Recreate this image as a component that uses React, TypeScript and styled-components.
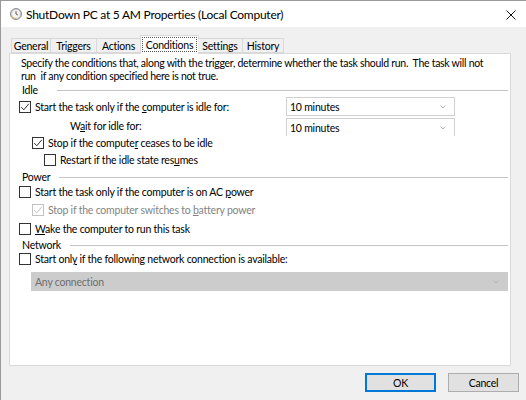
import React from 'react'
import styled, { createGlobalStyle } from 'styled-components'

const GlobalStyle = createGlobalStyle`
  html, body {
    margin: 0;
    background: #f0f0f0;
  }
  body {
    font-family: Lato, "Liberation Sans", sans-serif;
    font-size: 10.5px;
    letter-spacing: -0.22px;
    color: #000;
  }
`

const Window = styled.div`
  width: 525px;
  height: 399px;
  border-top: 1px solid #9a9a9a;
  border-left: 1px solid #9a9a9a;
  background: #f0f0f0;
  display: flex;
  flex-direction: column;
  overflow: hidden;
`

const TitleBar = styled.div`
  height: 26px;
  flex: none;
  background: #fff;
  display: flex;
  align-items: center;
  padding-left: 9px;
  padding-right: 10px;
`

const TitleText = styled.div`
  flex: 1;
  margin-left: 4px;
  font-size: 12px;
  letter-spacing: -0.25px;
  color: #000;
`

const CloseButton = styled.div`
  width: 10px;
  height: 10px;
  display: flex;
  margin-top: 1px;
`

const Body = styled.div`
  flex: 1;
  display: flex;
  flex-direction: column;
  padding: 8px 0 0 8px;
`

const TabStrip = styled.div`
  display: flex;
  align-items: flex-end;
  height: 18px;
  padding-left: 2px;
  position: relative;
  z-index: 1;
`

const Tab = styled.div<{ $w: number; $active?: boolean }>`
  width: ${({ $w }) => $w}px;
  height: ${({ $active }) => ($active ? 19 : 15)}px;
  margin: ${({ $active }) => ($active ? '0 -1px -1px' : '0')};
  box-sizing: border-box;
  border: 1px solid #d9d9d9;
  border-bottom: ${({ $active }) => ($active ? 'none' : '1px solid #d9d9d9')};
  border-left-width: ${({ $active }) => ($active ? 1 : 0)}px;
  background: ${({ $active }) => ($active ? '#fff' : '#f0f0f0')};
  display: flex;
  align-items: ${({ $active }) => ($active ? 'flex-start' : 'center')};
  justify-content: center;
  padding: ${({ $active }) => ($active ? '1px 1px 0' : '0')};
  white-space: nowrap;
  &:first-child {
    border-left-width: 1px;
  }
`

const FocusBox = styled.span`
  display: flex;
  align-items: center;
  justify-content: center;
  width: 100%;
  height: 15px;
  box-sizing: border-box;
  border: 1px dotted #555;
`

const Panel = styled.div`
  width: 502px;
  height: 313px;
  box-sizing: border-box;
  background: #fff;
  border: 1px solid #d9d9d9;
  padding: 3px 2px 0 9px;
  display: flex;
  flex-direction: column;
`

const Intro = styled.div`
  margin-left: 2px;
  line-height: 13px;
  white-space: pre;
  letter-spacing: -0.28px;
`

const Group = styled.div<{ $h: number }>`
  height: ${({ $h }) => $h}px;
  display: flex;
  align-items: center;
  padding-left: 3px;
`

const GroupLabel = styled.span`
  min-width: 35px;
  box-sizing: border-box;
  padding-right: 9px;
`

const GroupRule = styled.div`
  flex: 1;
  height: 1px;
  background: #c4c4c4;
  margin-top: 1px;
`

const Row = styled.div<{ $h: number; $indent?: number }>`
  height: ${({ $h }) => $h}px;
  display: grid;
  grid-template-columns: 267px 169px;
  align-items: center;
  padding-left: ${({ $indent = 0 }) => $indent}px;
`

const CheckLabel = styled.label<{ $disabled?: boolean }>`
  display: flex;
  align-items: center;
  white-space: nowrap;
  color: ${({ $disabled }) => ($disabled ? '#838383' : '#000')};
`

const Box = styled.span<{ $disabled?: boolean }>`
  width: 12px;
  height: 12px;
  flex: none;
  box-sizing: border-box;
  border: 1px solid ${({ $disabled }) => ($disabled ? '#c2c2c2' : '#333')};
  background: #fff;
  margin-right: 4px;
  display: flex;
  align-items: center;
  justify-content: center;
`

const PlainLabel = styled.span`
  padding-left: 51px;
  white-space: nowrap;
`

const Combo = styled.div<{ $open?: boolean; $disabled?: boolean }>`
  height: ${({ $open }) => ($open ? 18 : 19)}px;
  box-sizing: border-box;
  border: 1px solid ${({ $disabled }) => ($disabled ? '#cccccc' : '#d0d0d0')};
  border-bottom-width: ${({ $open }) => ($open ? 0 : 1)}px;
  background: ${({ $disabled }) => ($disabled ? '#cccccc' : '#fff')};
  color: ${({ $disabled }) => ($disabled ? '#6d6d6d' : '#000')};
  display: flex;
  align-items: center;
  padding: 0 8px 0 3px;
`

const ComboText = styled.span`
  flex: 1;
  white-space: nowrap;
`

const LowerCombo = styled(Combo)`
  align-self: end;
`

const NetworkCombo = styled(Combo)`
  margin: 5px 0 0 12px;
  height: 19px;
`

const Footer = styled.div`
  display: flex;
  justify-content: flex-end;
  gap: 12px;
  padding: 7px 7px 0 0;
`

const Button = styled.div<{ $default?: boolean }>`
  width: 71px;
  height: 19px;
  box-sizing: border-box;
  background: #e1e1e1;
  border: 1px solid ${({ $default }) => ($default ? '#0078d7' : '#adadad')};
  box-shadow: ${({ $default }) => ($default ? 'inset 0 0 0 1px #0078d7' : 'none')};
  display: flex;
  align-items: center;
  justify-content: center;
`

function Chevron({ light }: { light?: boolean }) {
  return (
    <svg width="6" height="4" viewBox="0 0 6 4">
      <polyline points="0.5,0.5 3,3 5.5,0.5" fill="none" stroke={light ? '#b4b4b4' : '#9a9a9a'} strokeWidth="1" />
    </svg>
  )
}

function Check({ checked, disabled, children }: { checked?: boolean; disabled?: boolean; children: React.ReactNode }) {
  return (
    <CheckLabel $disabled={disabled}>
      <Box $disabled={disabled}>
        {checked && (
          <svg width="10" height="10" viewBox="0 0 10 10">
            <polyline points="1.2,5 3.8,7.8 8.8,1.8" fill="none" stroke={disabled ? '#c2c2c2' : '#333'} strokeWidth="1" />
          </svg>
        )}
      </Box>
      <span>{children}</span>
    </CheckLabel>
  )
}

function ClockIcon() {
  return (
    <svg width="12" height="12" viewBox="0 0 12 12">
      <circle cx="6" cy="6" r="5.5" fill="#cfcfcf" stroke="#8e8e8e" strokeWidth="1" />
      <path d="M2.2 8.6 A4.4 4.4 0 0 0 6 10.4" fill="none" stroke="#e0b040" strokeWidth="1.2" />
      <circle cx="6" cy="6" r="3.9" fill="#f4f4f4" />
      <polyline points="6,3.2 6,6 7.9,7" fill="none" stroke="#555" strokeWidth="1" />
    </svg>
  )
}

export default function App() {
  const tabs = [
    { name: 'General', w: 40 },
    { name: 'Triggers', w: 46 },
    { name: 'Actions', w: 44 },
    { name: 'Conditions', w: 59, active: true },
    { name: 'Settings', w: 45 },
    { name: 'History', w: 41 },
  ]

  return (
    <Window>
      <GlobalStyle />
      <TitleBar>
        <ClockIcon />
        <TitleText>ShutDown PC at 5 AM Properties (Local Computer)</TitleText>
        <CloseButton>
          <svg width="10" height="10" viewBox="0 0 10 10">
            <path d="M0.5 0.5 L9.5 9.5 M9.5 0.5 L0.5 9.5" stroke="#111" strokeWidth="1" />
          </svg>
        </CloseButton>
      </TitleBar>

      <Body>
        <TabStrip>
          {tabs.map((t) =>
            t.active ? (
              <Tab key={t.name} $w={t.w} $active>
                <FocusBox>{t.name}</FocusBox>
              </Tab>
            ) : (
              <Tab key={t.name} $w={t.w}>
                {t.name}
              </Tab>
            )
          )}
        </TabStrip>

        <Panel>
          <Intro>
            {'Specify the conditions that, along with the trigger, determine whether the task should run.  The task will not'}
            <br />
            {'run  if any condition specified here is not true.'}
          </Intro>

          <Group $h={14}>
            <GroupLabel>Idle</GroupLabel>
            <GroupRule />
          </Group>
          <Row $h={18}>
            <Check checked>
              Start the task only if the <u>c</u>omputer is idle for:
            </Check>
            <Combo>
              <ComboText>10 minutes</ComboText>
              <Chevron light />
            </Combo>
          </Row>
          <Row $h={21}>
            <PlainLabel>
              W<u>a</u>it for idle for:
            </PlainLabel>
            <LowerCombo $open>
              <ComboText>10 minutes</ComboText>
              <Chevron light />
            </LowerCombo>
          </Row>
          <Row $h={14} $indent={13}>
            <Check checked>
              Stop if the compute<u>r</u> ceases to be idle
            </Check>
          </Row>
          <Row $h={20} $indent={25}>
            <Check>
              Restart if the idle state res<u>u</u>mes
            </Check>
          </Row>

          <Group $h={13}>
            <GroupLabel>Power</GroupLabel>
            <GroupRule />
          </Group>
          <Row $h={18}>
            <Check>
              Start the task only if the computer is on AC <u>p</u>ower
            </Check>
          </Row>
          <Row $h={18} $indent={13}>
            <Check checked disabled>
              Stop if the computer switches to <u>b</u>attery power
            </Check>
          </Row>
          <Row $h={19}>
            <Check>
              <u>W</u>ake the computer to run this task
            </Check>
          </Row>

          <Group $h={13}>
            <GroupLabel>Network</GroupLabel>
            <GroupRule />
          </Group>
          <Row $h={16}>
            <Check>
              Start onl<u>y</u> if the following network connection is available:
            </Check>
          </Row>
          <NetworkCombo $disabled>
            <ComboText>Any connection</ComboText>
            <Chevron light />
          </NetworkCombo>
        </Panel>

        <Footer>
          <Button $default>OK</Button>
          <Button>Cancel</Button>
        </Footer>
      </Body>
    </Window>
  )
}
